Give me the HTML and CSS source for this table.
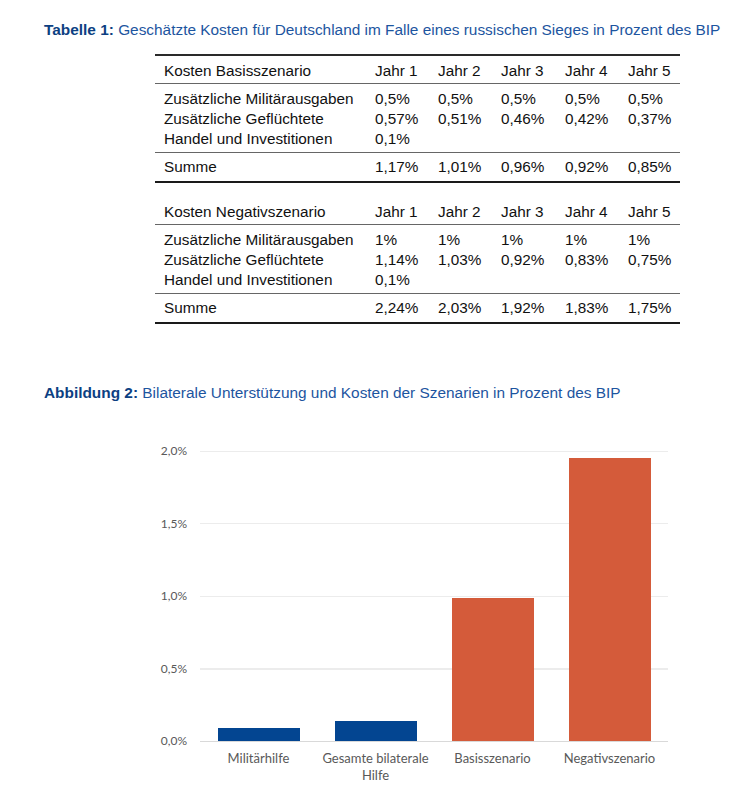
FILE: index.html
```html
<!DOCTYPE html>
<html lang="de">
<head>
<meta charset="utf-8">
<title>Kosten</title>
<link rel="stylesheet" href="styles.css">
</head>
<body>
<div class="page">
  <p class="caption caption-table"><b>Tabelle 1:</b> Geschätzte Kosten für Deutschland im Falle eines russischen Sieges in Prozent des BIP</p>

  <table class="costs">
    <colgroup><col class="c-label"><col class="c-y"><col class="c-y"><col class="c-y3"><col class="c-y"><col class="c-y5"></colgroup>
    <thead>
      <tr><th>Kosten Basisszenario</th><th>Jahr 1</th><th>Jahr 2</th><th>Jahr 3</th><th>Jahr 4</th><th>Jahr 5</th></tr>
    </thead>
    <tbody class="items">
      <tr class="first"><td>Zusätzliche Militärausgaben</td><td>0,5%</td><td>0,5%</td><td>0,5%</td><td>0,5%</td><td>0,5%</td></tr>
      <tr><td>Zusätzliche Geflüchtete</td><td>0,57%</td><td>0,51%</td><td>0,46%</td><td>0,42%</td><td>0,37%</td></tr>
      <tr class="last"><td>Handel und Investitionen</td><td>0,1%</td><td></td><td></td><td></td><td></td></tr>
    </tbody>
    <tbody class="sum">
      <tr><td>Summe</td><td>1,17%</td><td>1,01%</td><td>0,96%</td><td>0,92%</td><td>0,85%</td></tr>
    </tbody>
  </table>

  <table class="costs second">
    <colgroup><col class="c-label"><col class="c-y"><col class="c-y"><col class="c-y3"><col class="c-y"><col class="c-y5"></colgroup>
    <thead>
      <tr><th>Kosten Negativszenario</th><th>Jahr 1</th><th>Jahr 2</th><th>Jahr 3</th><th>Jahr 4</th><th>Jahr 5</th></tr>
    </thead>
    <tbody class="items">
      <tr class="first"><td>Zusätzliche Militärausgaben</td><td>1%</td><td>1%</td><td>1%</td><td>1%</td><td>1%</td></tr>
      <tr><td>Zusätzliche Geflüchtete</td><td>1,14%</td><td>1,03%</td><td>0,92%</td><td>0,83%</td><td>0,75%</td></tr>
      <tr class="last"><td>Handel und Investitionen</td><td>0,1%</td><td></td><td></td><td></td><td></td></tr>
    </tbody>
    <tbody class="sum">
      <tr><td>Summe</td><td>2,24%</td><td>2,03%</td><td>1,92%</td><td>1,83%</td><td>1,75%</td></tr>
    </tbody>
  </table>

  <p class="caption caption-fig"><b>Abbildung 2:</b> Bilaterale Unterstützung und Kosten der Szenarien in Prozent des BIP</p>

  <div class="chart">
    <div class="chart-main">
      <div class="y-axis">
        <span>2,0%</span><span>1,5%</span><span>1,0%</span><span>0,5%</span><span>0,0%</span>
      </div>
      <div class="plot">
        <div class="slot"><div class="bar blue" style="height:13px"></div></div>
        <div class="slot"><div class="bar blue" style="height:20px"></div></div>
        <div class="slot"><div class="bar orange" style="height:143px"></div></div>
        <div class="slot"><div class="bar orange" style="height:283px"></div></div>
      </div>
    </div>
    <div class="x-axis">
      <span>Militärhilfe</span>
      <span>Gesamte bilaterale<br>Hilfe</span>
      <span>Basisszenario</span>
      <span>Negativszenario</span>
    </div>
  </div>
</div>
</body>
</html>
```

FILE: styles.css
```css
* { box-sizing: border-box; }
html, body { margin: 0; padding: 0; background: #ffffff; }
body { font-family: "Liberation Sans", Arial, sans-serif; color: #111; }

.page { padding: 20px 0 0 44px; width: 747px; }

.caption {
  margin: 0;
  font-size: 15.4px;
  line-height: 20px;
  color: #1d55a0;
  white-space: nowrap;
}
.caption b { color: #0d3f82; }
.caption-table { margin-bottom: 14px; }
.caption-fig { margin-top: 59px; }

.costs {
  margin-left: 111px;
  width: 525px;
  table-layout: fixed;
  border-collapse: collapse;
  font-size: 15.3px;
  line-height: 20px;
  color: #111;
}
.costs.second { margin-top: 14px; }
.costs:first-of-type { border-top: 2px solid #2a2a2a; }
.c-label { width: 220px; }
.c-y { width: 63px; }
.c-y3 { width: 64px; }
.c-y5 { width: 52px; }

.costs th, .costs td {
  padding: 0;
  text-align: left;
  font-weight: normal;
  white-space: nowrap;
}
.costs th:first-child, .costs td:first-child { padding-left: 9px; }
.costs thead th { padding-top: 5px; padding-bottom: 2px; border-bottom: 1px solid #666; }
.costs .items .first td { padding-top: 5px; }
.costs .items .last td { padding-bottom: 3px; }
.costs .sum td { padding-top: 4px; padding-bottom: 4px; border-top: 1px solid #666; border-bottom: 2px solid #1a1a1a; }

.chart { margin-top: 48px; font-family: Lato, "Liberation Sans", sans-serif; color: #595959; }
.chart-main { display: flex; }
.y-axis {
  width: 143px;
  height: 304px;
  margin-top: -7px;
  display: flex;
  flex-direction: column;
  justify-content: space-between;
  align-items: flex-end;
  line-height: 14px;
  font-size: 12px;
}
.plot {
  margin-left: 13px;
  width: 468px;
  height: 291px;
  display: flex;
  align-items: flex-end;
  border-bottom: 1px solid #d9d9d9;
  background: repeating-linear-gradient(to bottom, #ececec 0, #ececec 1px, transparent 1px, transparent 72.5px);
}
.slot { flex: 1; display: flex; justify-content: center; align-items: flex-end; }
.bar { width: 82px; }
.bar.blue { background: #034591; }
.bar.orange { background: #d45b3a; }

.x-axis {
  margin-left: 156px;
  width: 468px;
  display: grid;
  grid-template-columns: repeat(4, 1fr);
  text-align: center;
  line-height: 17px;
  font-size: 13px;
  padding-top: 2px;
}
```
